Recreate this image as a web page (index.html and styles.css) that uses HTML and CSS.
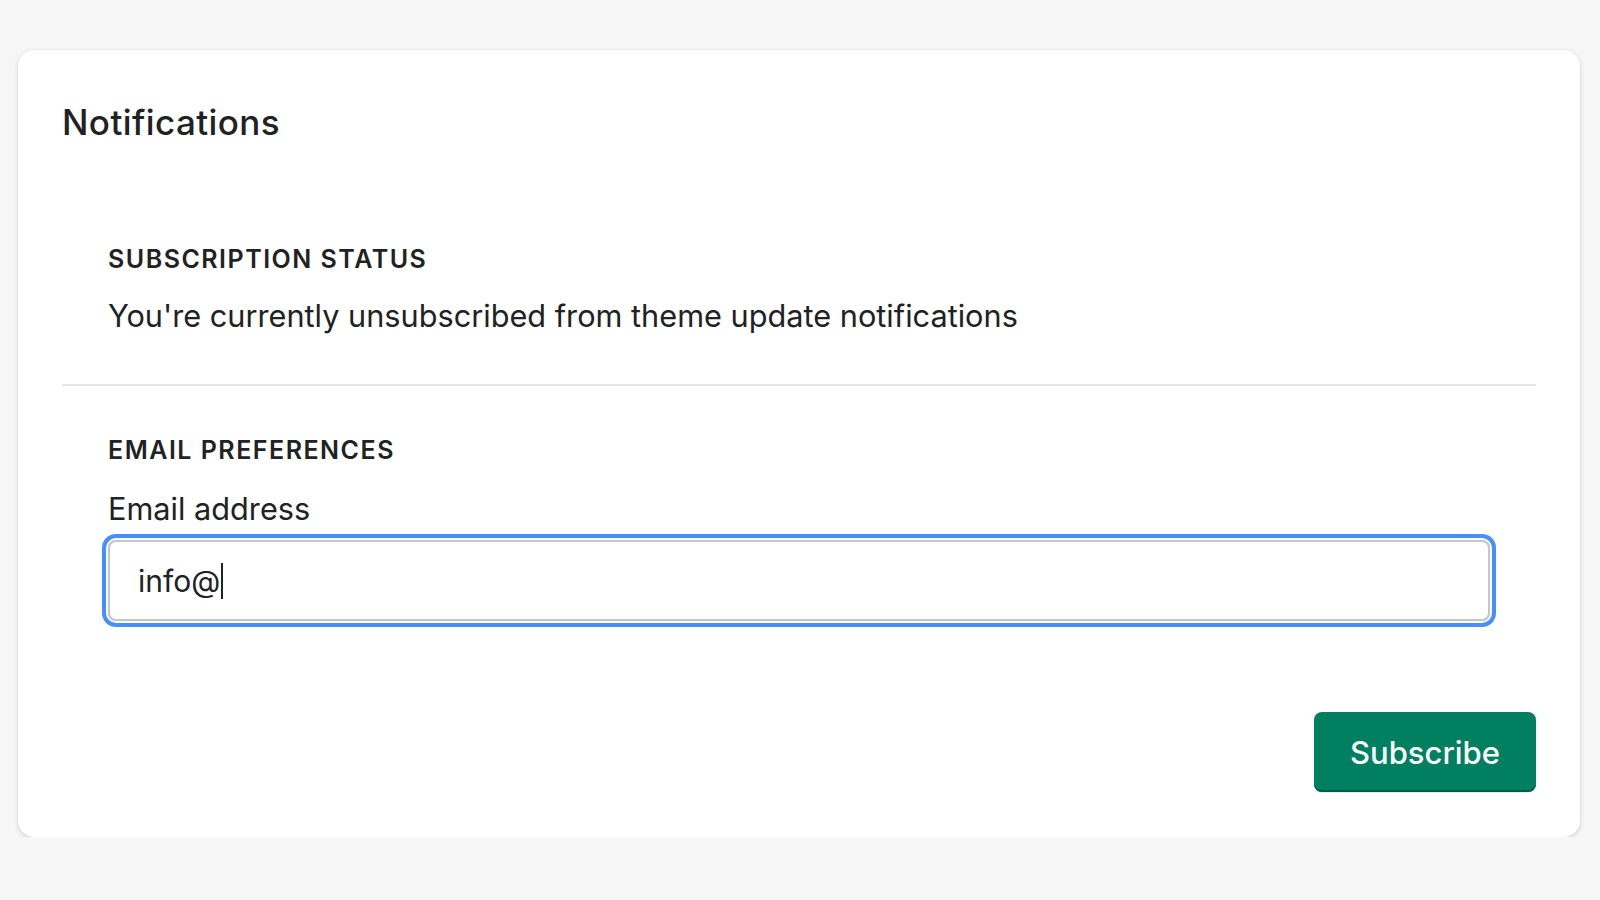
FILE: index.html
```html
<!DOCTYPE html>
<html lang="en">
<head>
<meta charset="utf-8">
<title>Notifications</title>
<link rel="stylesheet" href="styles.css">
</head>
<body>
  <div class="card">
    <h2 class="card-title">Notifications</h2>
    <section class="section section-status">
      <h3 class="section-label">SUBSCRIPTION STATUS</h3>
      <p class="section-text">You're currently unsubscribed from theme update notifications</p>
    </section>
    <hr class="divider">
    <section class="section section-email">
      <h3 class="section-label">EMAIL PREFERENCES</h3>
      <label class="field-label" for="email">Email address</label>
      <div class="input-wrap">
        <span class="input-value">info@</span><span class="caret"></span>
      </div>
    </section>
    <div class="card-footer">
      <button class="btn-primary" type="button">Subscribe</button>
    </div>
  </div>
</body>
</html>
```

FILE: styles.css
```css
html, body {
  margin: 0;
  padding: 0;
  background: #f6f6f7;
}
body {
  font-family: Inter, "Noto Sans", sans-serif;
  color: #202223;
  padding: 50px 20px 0 18px;
}
.card {
  width: 1562px;
  height: 787px;
  box-sizing: border-box;
  background: #ffffff;
  border-radius: 16px;
  box-shadow: 0 0 0 1px rgba(0, 0, 0, 0.025), 0 2px 5px rgba(0, 0, 0, 0.13);
  padding: 52px 44px 0 44px;
  display: flex;
  flex-direction: column;
}
.card-title {
  margin: 0;
  font-size: 35px;
  line-height: 41px;
  font-weight: 500;
  letter-spacing: 0.4px;
}
.section {
  padding: 0 46px;
}
.section-status {
  margin-top: 102px;
}
.section-label {
  margin: 0;
  font-size: 25px;
  line-height: 28px;
  font-weight: 600;
  letter-spacing: 1.5px;
}
.section-text {
  margin: 23px 0 0 0;
  font-size: 30.7px;
  line-height: 40px;
  font-weight: 400;
}
.divider {
  border: 0;
  height: 2px;
  background: #e4e5e7;
  margin: 48px 0 0 0;
}
.section-email {
  margin-top: 50px;
}
.field-label {
  display: block;
  margin-top: 25px;
  font-size: 30.7px;
  line-height: 40px;
}
.input-wrap {
  margin-top: 11px;
  height: 81px;
  box-sizing: border-box;
  border: 2px solid #c4c6c9;
  border-radius: 8px;
  box-shadow: 0 0 0 2px #ffffff, 0 0 0 6px #458fff;
  display: flex;
  align-items: center;
  padding: 0 0 0 28px;
}
.input-value {
  font-size: 30px;
  line-height: 40px;
}
.caret {
  width: 2px;
  height: 36px;
  background: #202223;
  margin-left: 1px;
}
.card-footer {
  margin-top: 91px;
  display: flex;
  justify-content: flex-end;
}
.btn-primary {
  width: 222px;
  height: 80px;
  border: 0;
  border-radius: 8px;
  background: #008060;
  color: #ffffff;
  font-family: Inter, "Noto Sans", sans-serif;
  font-size: 31px;
  font-weight: 500;
  box-shadow: inset 0 -2px 0 #005e46, 0 1px 0 rgba(0, 0, 0, 0.08);
  padding: 0;
}
```
